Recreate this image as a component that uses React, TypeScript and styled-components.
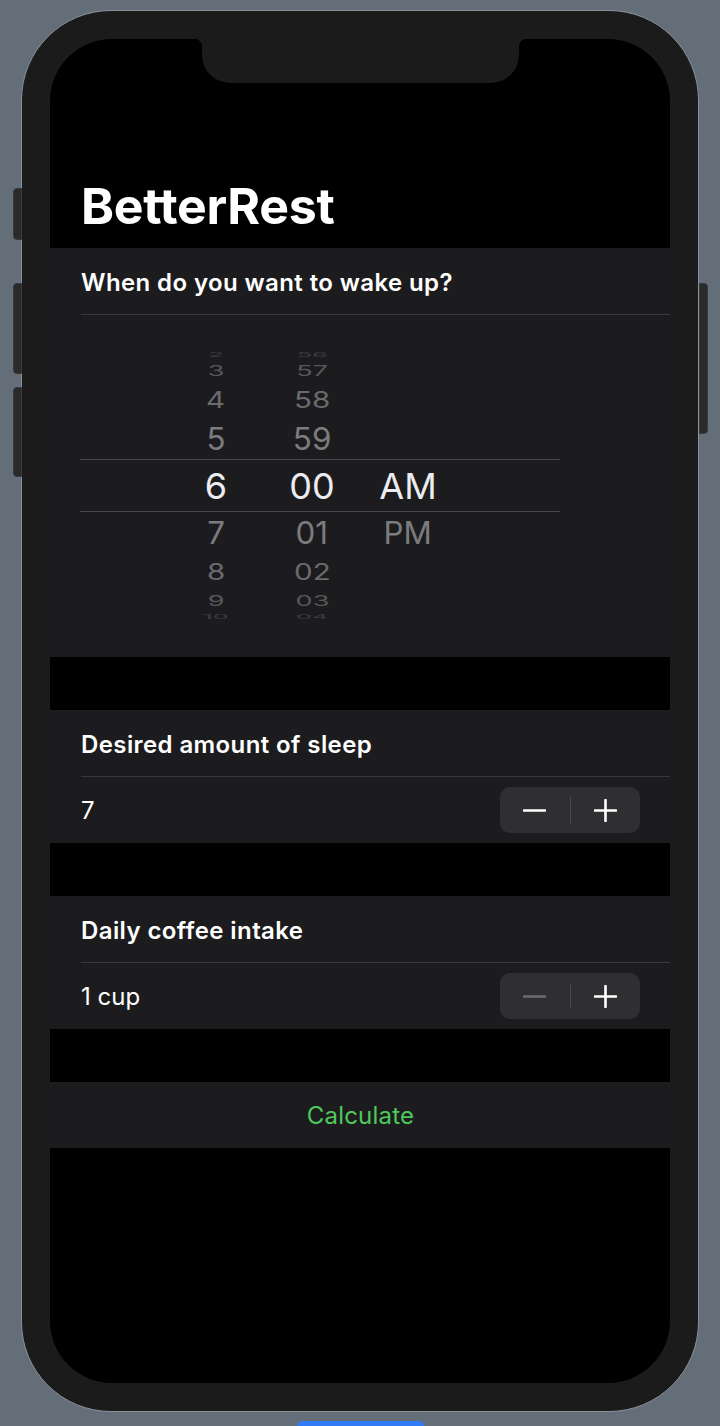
import React from "react";
import styled, { createGlobalStyle } from "styled-components";

const GlobalStyle = createGlobalStyle`
    html, body {
        margin: 0;
        padding: 0;
        background: #646e79;
        font-family: "Inter", "Liberation Sans", sans-serif;
        -webkit-font-smoothing: antialiased;
    }
    #root {
        overflow: hidden;
        height: 1426px;
    }
`;

const Page = styled.div`
    display: flex;
    flex-direction: column;
    align-items: center;
    padding-top: 10px;
`;

const Phone = styled.div`
    position: relative;
    width: 678px;
    height: 1402px;
    box-sizing: border-box;
    padding: 28px;
    background: #1b1b1b;
    border: 1px solid #8a919a;
    border-radius: 90px;
`;

const SideButton = styled.div<{side: "left" | "right"; top: number; height: number}>`
    position: absolute;
    top: ${props => props.top}px;
    height: ${props => props.height}px;
    width: 9px;
    ${props => props.side === "left" ? "left: -9px;" : "right: -10px;"}
    background: #2a2a2b;
    border: 1px solid #3a3a3c;
    border-radius: ${props => props.side === "left" ? "4px 0 0 4px" : "0 4px 4px 0"};
    box-sizing: border-box;
`;

const Screen = styled.div`
    position: relative;
    height: 100%;
    background: #000;
    border-radius: 62px;
    overflow: hidden;
    display: flex;
    flex-direction: column;
`;

const Notch = styled.div`
    position: absolute;
    top: 0;
    left: 152px;
    width: 317px;
    height: 44px;
    background: #1b1b1b;
    border-radius: 0 0 28px 28px;

    &::before, &::after {
        content: "";
        position: absolute;
        top: 0;
        width: 8px;
        height: 8px;
    }
    &::before {
        left: -8px;
        background: radial-gradient(circle at 0 100%, transparent 8px, #1b1b1b 8.5px);
    }
    &::after {
        right: -8px;
        background: radial-gradient(circle at 100% 100%, transparent 8px, #1b1b1b 8.5px);
    }
`;

const Header = styled.div`
    height: 209px;
    display: flex;
    align-items: flex-end;
    padding: 0 0 12px 31px;
    box-sizing: border-box;
`;

const Title = styled.h1`
    margin: 0;
    color: #fff;
    font-size: 50px;
    line-height: 1.2;
    font-weight: 700;
    letter-spacing: -0.3px;
`;

const Section = styled.section<{gap?: boolean}>`
    background: #1c1c1e;
    margin-top: ${props => props.gap ? "53px" : "0"};
`;

const Row = styled.div<{center?: boolean}>`
    height: 66px;
    display: flex;
    align-items: center;
    justify-content: ${props => props.center ? "center" : "space-between"};
    padding: 0 30px 0 31px;
`;

const Divider = styled.div`
    height: 1px;
    margin-left: 31px;
    background: #38383a;
`;

const SectionTitle = styled.span`
    color: #fff;
    font-size: 24px;
    font-weight: 600;
    letter-spacing: 0.4px;
    padding-top: 2px;
`;

const Value = styled.span`
    color: #fff;
    font-size: 24px;
    font-weight: 400;
`;

const CalcButton = styled.button`
    background: none;
    border: none;
    padding: 0;
    color: #4fc85c;
    font-family: inherit;
    font-size: 24px;
    font-weight: 400;
    letter-spacing: 0.2px;
    cursor: pointer;
`;

const PickerArea = styled.div`
    height: 342px;
    box-sizing: border-box;
    padding: 35px 0 0 30px;
`;

const Picker = styled.div`
    position: relative;
    width: 480px;
    display: grid;
    grid-template-columns: 88px 96px 96px 96px;
`;

const SelectionBand = styled.div`
    position: absolute;
    left: 0;
    right: 0;
    top: 109px;
    height: 53px;
    box-sizing: border-box;
    border-top: 1px solid #4a4a4c;
    border-bottom: 1px solid #4a4a4c;
    pointer-events: none;
`;

const Wheel = styled.div`
    display: flex;
    flex-direction: column;
    align-items: center;
`;

const WheelRow = styled.div<{h: number}>`
    height: ${props => props.h}px;
    width: 100%;
    display: flex;
    align-items: center;
    justify-content: center;
`;

const WheelText = styled.span<{sx: number; sy: number; color: string}>`
    display: inline-block;
    font-size: 36px;
    line-height: 1;
    font-weight: 400;
    color: ${props => props.color};
    transform: scale(${props => props.sx}, ${props => props.sy});
    white-space: nowrap;
`;

const Stepper = styled.div`
    width: 140px;
    height: 46px;
    background: #2f2f31;
    border-radius: 10px;
    display: flex;
    align-items: center;
`;

const StepButton = styled.button<{disabled?: boolean}>`
    flex: 1;
    height: 100%;
    background: none;
    border: none;
    padding: 0;
    display: flex;
    align-items: center;
    justify-content: center;
    color: ${props => props.disabled ? "#6d6d70" : "#fff"};
`;

const StepDivider = styled.div`
    width: 1px;
    height: 26px;
    background: #4a4a4c;
`;

const HomeBar = styled.div`
    margin-top: 9px;
    margin-left: 1px;
    width: 127px;
    height: 12px;
    background: #2f7cf6;
    border-radius: 5px 5px 0 0;
`;

// offset -4..4 from the selected row
const wheelLook = [
    {h: 10, sx: 0.7, sy: 0.18, color: "#3c3c3e"},
    {h: 22, sx: 0.75, sy: 0.4, color: "#58585a"},
    {h: 36, sx: 0.82, sy: 0.64, color: "#6b6b6d"},
    {h: 42, sx: 0.87, sy: 0.86, color: "#7c7c7e"},
    {h: 52, sx: 1, sy: 1, color: "#ebebf0"},
    {h: 42, sx: 0.87, sy: 0.86, color: "#7c7c7e"},
    {h: 36, sx: 0.82, sy: 0.64, color: "#6b6b6d"},
    {h: 22, sx: 0.75, sy: 0.4, color: "#58585a"},
    {h: 10, sx: 0.7, sy: 0.18, color: "#3c3c3e"},
];

const hours = ["2", "3", "4", "5", "6", "7", "8", "9", "10"];
const minutes = ["56", "57", "58", "59", "00", "01", "02", "03", "04"];
const meridiem = ["", "", "", "", "AM", "PM", "", "", ""];

const WheelColumn = ({items}: {items: string[]}) => (
    <Wheel>
        {items.map((text, i) => {
            const look = wheelLook[i];
            return (
                <WheelRow key={i} h={look.h}>
                    <WheelText sx={look.sx} sy={look.sy} color={look.color}>{text}</WheelText>
                </WheelRow>
            );
        })}
    </Wheel>
);

const Minus = () => (
    <svg width="23" height="23" viewBox="0 0 23 23">
        <path d="M1 11.5h21" stroke="currentColor" strokeWidth="2.6" strokeLinecap="round" />
    </svg>
);

const Plus = () => (
    <svg width="23" height="23" viewBox="0 0 23 23">
        <path d="M1 11.5h21M11.5 1v21" stroke="currentColor" strokeWidth="2.6" strokeLinecap="round" />
    </svg>
);

const StepperControl = ({minDisabled}: {minDisabled?: boolean}) => (
    <Stepper>
        <StepButton disabled={minDisabled}><Minus /></StepButton>
        <StepDivider />
        <StepButton><Plus /></StepButton>
    </Stepper>
);

export default function App() {
    const [sleep] = React.useState(7);
    const [coffee] = React.useState(1);

    return (
        <>
            <GlobalStyle />
            <Page>
                <Phone>
                    <SideButton side="left" top={177} height={52} />
                    <SideButton side="left" top={272} height={91} />
                    <SideButton side="left" top={376} height={90} />
                    <SideButton side="right" top={272} height={151} />
                    <Screen>
                        <Notch />
                        <Header>
                            <Title>BetterRest</Title>
                        </Header>

                        <Section>
                            <Row>
                                <SectionTitle>When do you want to wake up?</SectionTitle>
                            </Row>
                            <Divider />
                            <PickerArea>
                                <Picker>
                                    <div />
                                    <WheelColumn items={hours} />
                                    <WheelColumn items={minutes} />
                                    <WheelColumn items={meridiem} />
                                    <SelectionBand />
                                </Picker>
                            </PickerArea>
                        </Section>

                        <Section gap>
                            <Row>
                                <SectionTitle>Desired amount of sleep</SectionTitle>
                            </Row>
                            <Divider />
                            <Row>
                                <Value>{sleep}</Value>
                                <StepperControl />
                            </Row>
                        </Section>

                        <Section gap>
                            <Row>
                                <SectionTitle>Daily coffee intake</SectionTitle>
                            </Row>
                            <Divider />
                            <Row>
                                <Value>{coffee === 1 ? "1 cup" : `${coffee} cups`}</Value>
                                <StepperControl minDisabled />
                            </Row>
                        </Section>

                        <Section gap>
                            <Row center>
                                <CalcButton>Calculate</CalcButton>
                            </Row>
                        </Section>
                    </Screen>
                </Phone>
                <HomeBar />
            </Page>
        </>
    );
}
